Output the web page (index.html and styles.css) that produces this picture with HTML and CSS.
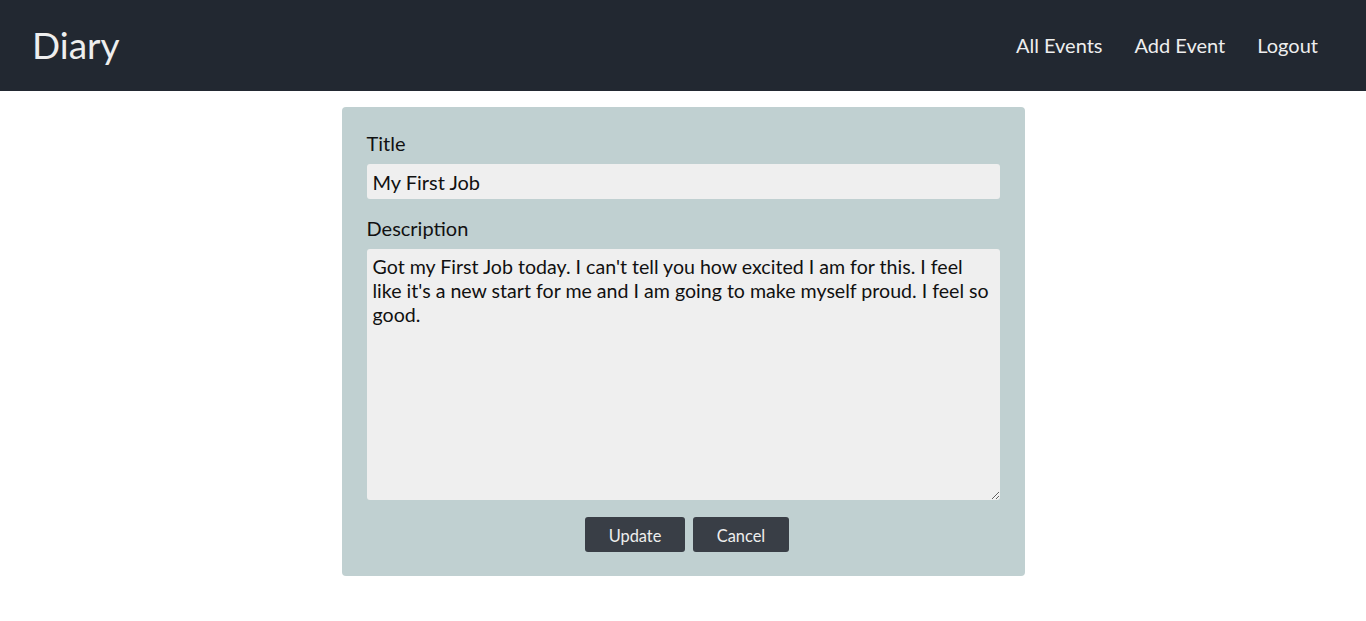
FILE: index.html
```html
<!DOCTYPE html>
<html lang="en">
<head>
<meta charset="utf-8">
<title>Diary</title>
<link rel="stylesheet" href="styles.css">
</head>
<body>
<nav class="navbar">
  <a class="brand" href="#">Diary</a>
  <div class="nav-links">
    <a href="#">All Events</a>
    <a href="#">Add Event</a>
    <a href="#">Logout</a>
  </div>
</nav>
<main class="main">
  <form class="card">
    <div class="group">
      <label for="title">Title</label>
      <input id="title" type="text" value="My First Job">
    </div>
    <div class="group group-desc">
      <label for="desc">Description</label>
      <textarea id="desc">Got my First Job today. I can't tell you how excited I am for this. I feel like it's a new start for me and I am going to make myself proud. I feel so good.</textarea>
    </div>
    <div class="actions">
      <button type="button" class="btn btn-update">Update</button>
      <button type="button" class="btn btn-cancel">Cancel</button>
    </div>
  </form>
</main>
</body>
</html>
```

FILE: styles.css
```css
* { box-sizing: border-box; }
html, body {
  margin: 0;
  padding: 0;
  background: #ffffff;
  font-family: Lato, "Open Sans", sans-serif;
}
.navbar {
  height: 91px;
  background: #222831;
  display: flex;
  align-items: center;
  justify-content: space-between;
  padding: 0 48px 0 32px;
}
.brand {
  color: #eeeeee;
  text-decoration: none;
  font-size: 37px;
  line-height: 1;
  margin-top: -2px;
}
.nav-links {
  display: flex;
  gap: 32px;
}
.nav-links a {
  color: #eeeeee;
  text-decoration: none;
  font-size: 20px;
  margin-top: -2px;
}
.main {
  display: flex;
  justify-content: center;
  padding-top: 16px;
}
.card {
  width: 683px;
  background: #c0d0d1;
  border-radius: 4px;
  padding: 24px 24px 24px 25px;
}
.group label {
  display: block;
  font-size: 20px;
  line-height: 24px;
  color: #111111;
  margin-bottom: 9px;
}
.group-desc {
  margin-top: 17px;
}
.group input,
.group textarea {
  display: block;
  width: 633px;
  border: none;
  outline: none;
  background: #efefef;
  border-radius: 3px;
  font-family: Lato, "Open Sans", sans-serif;
  font-size: 20px;
  color: #111111;
}
.group input {
  height: 35px;
  padding: 0 6px;
}
.group textarea {
  height: 251px;
  padding: 6px 6px;
  font-size: 19.6px;
  line-height: 24px;
  resize: vertical;
}
.actions {
  display: flex;
  justify-content: center;
  gap: 8px;
  margin-top: 17px;
  padding-left: 7px;
}
.btn {
  height: 35px;
  border: none;
  border-radius: 3px;
  background: #393e46;
  color: #eeeeee;
  font-family: Lato, "Open Sans", sans-serif;
  font-size: 16.4px;
  padding: 1px 0 0;
}
.btn-update { width: 100px; }
.btn-cancel { width: 96px; }
```
